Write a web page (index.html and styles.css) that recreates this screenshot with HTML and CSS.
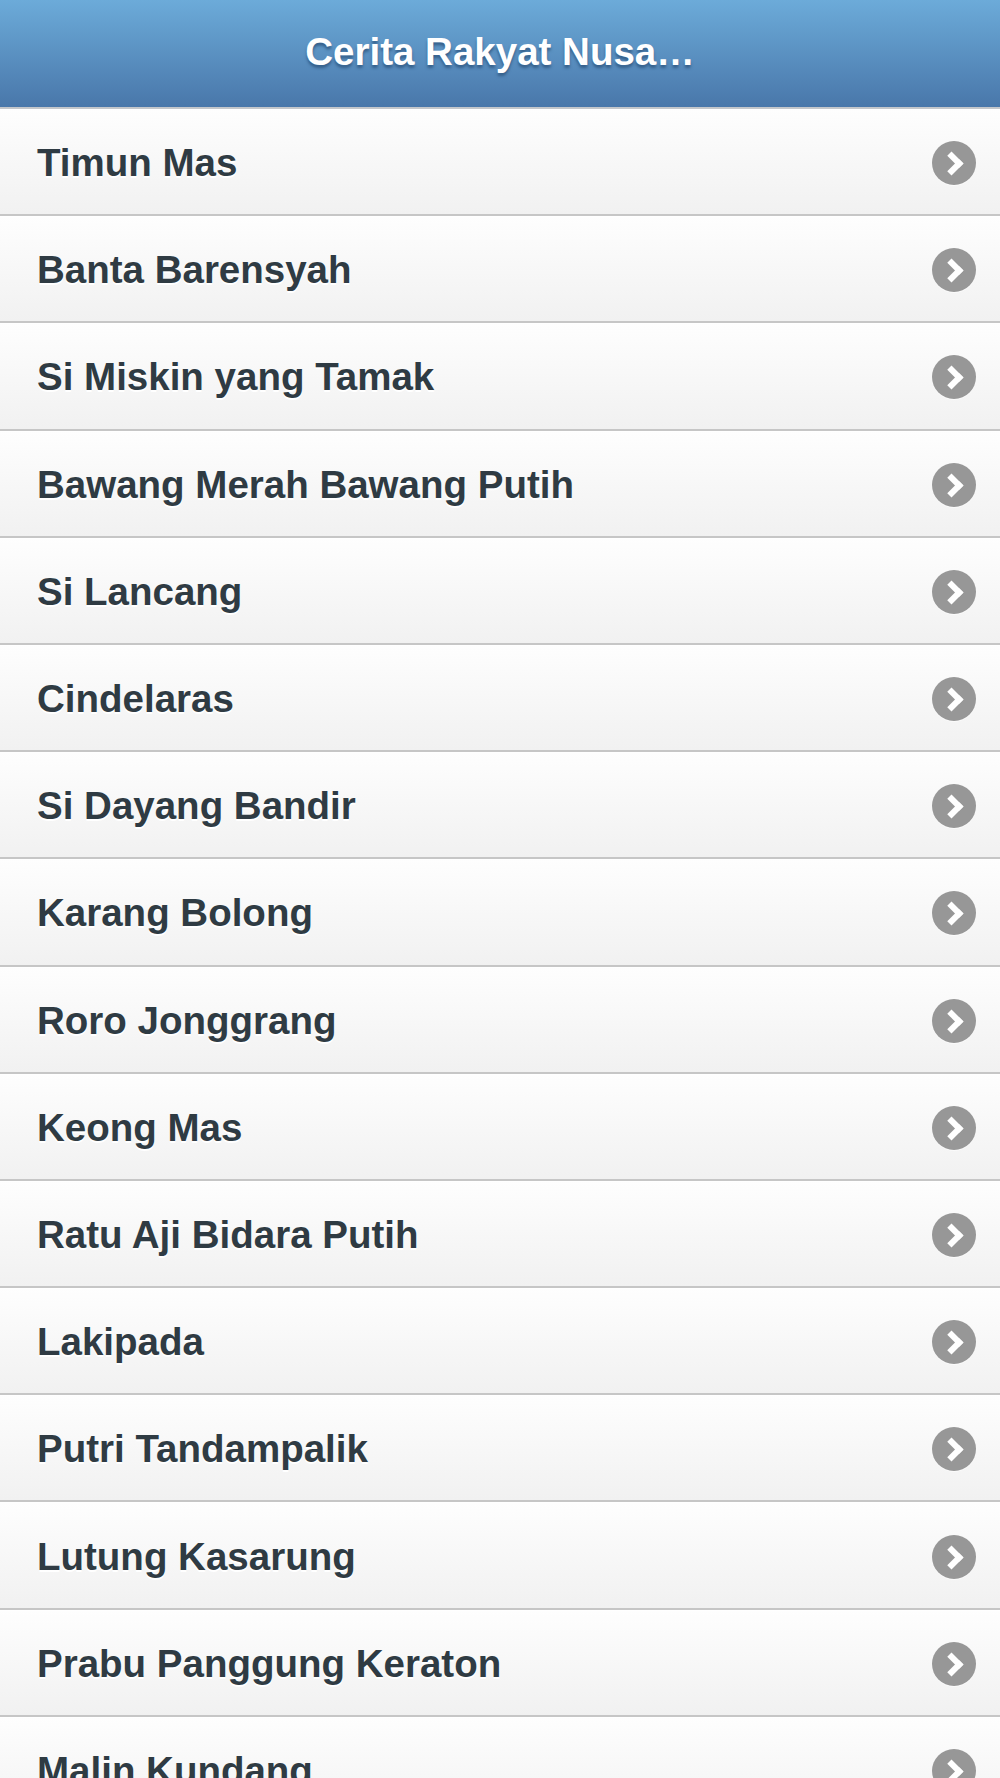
FILE: index.html
```html
<!DOCTYPE html>
<html lang="id">
    <head>
        <meta charset="utf-8">
        <title>Cerita Rakyat Nusantara</title>
        <link rel="stylesheet" href="styles.css">
    </head>
    <body>
<div class="page">
<div class="header">
    <h1 class="title">Cerita Rakyat Nusa…</h1>
</div>
<ul class="listview">
    <li><a href="#timun-mas"><span class="label">Timun Mas</span><span class="arrow"></span></a></li>
    <li><a href="#banta-barensyah"><span class="label">Banta Barensyah</span><span class="arrow"></span></a></li>
    <li><a href="#si-miskin"><span class="label">Si Miskin yang Tamak</span><span class="arrow"></span></a></li>
    <li><a href="#bawang-merah"><span class="label">Bawang Merah Bawang Putih</span><span class="arrow"></span></a></li>
    <li><a href="#si-lancang"><span class="label">Si Lancang</span><span class="arrow"></span></a></li>
    <li><a href="#cindelaras"><span class="label">Cindelaras</span><span class="arrow"></span></a></li>
    <li><a href="#si-dayang"><span class="label">Si Dayang Bandir</span><span class="arrow"></span></a></li>
    <li><a href="#karang-bolong"><span class="label">Karang Bolong</span><span class="arrow"></span></a></li>
    <li><a href="#roro-jonggrang"><span class="label">Roro Jonggrang</span><span class="arrow"></span></a></li>
    <li><a href="#keong-mas"><span class="label">Keong Mas</span><span class="arrow"></span></a></li>
    <li><a href="#ratu-aji"><span class="label">Ratu Aji Bidara Putih</span><span class="arrow"></span></a></li>
    <li><a href="#lakipada"><span class="label">Lakipada</span><span class="arrow"></span></a></li>
    <li><a href="#putri-tandampalik"><span class="label">Putri Tandampalik</span><span class="arrow"></span></a></li>
    <li><a href="#lutung-kasarung"><span class="label">Lutung Kasarung</span><span class="arrow"></span></a></li>
    <li><a href="#prabu-panggung"><span class="label">Prabu Panggung Keraton</span><span class="arrow"></span></a></li>
    <li><a href="#malin-kundang"><span class="label">Malin Kundang</span><span class="arrow"></span></a></li>
</ul>
</div>
    </body>
</html>
```

FILE: styles.css
```css
body {
    margin: 0;
    font-family: "Liberation Sans", Arial, sans-serif;
    background: #f9f9f9;
}
.header {
    height: 107px;
    display: flex;
    align-items: center;
    justify-content: center;
    background: linear-gradient(#6cabd9, #4977aa);
    border-bottom: 2px solid #c4c7cb;
}
.title {
    margin: 0 0 4px 0;
    font-size: 38.5px;
    font-weight: bold;
    color: #fff;
    text-shadow: 0 3px 3px #355f8a;
    white-space: nowrap;
}
.listview {
    list-style: none;
    margin: 0;
    padding: 0;
}
.listview li {
    border-bottom: 2px solid #c6c6c6;
    box-shadow: inset 0 1px 0 #fff;
    background: linear-gradient(#fefefe, #f1f1f1);
}
.listview a {
    height: 105.2px;
    display: flex;
    align-items: center;
    justify-content: space-between;
    padding: 0 24px 0 37px;
    text-decoration: none;
}
.label {
    font-size: 38.5px;
    font-weight: bold;
    color: #2f3b43;
    text-shadow: 0 2px 0 #fff;
    margin-top: 3px;
}
/* chevron circle drawn in css */
.arrow {
    position: relative;
    width: 44px;
    height: 44px;
    margin-top: 3px;
    border-radius: 50%;
    background: #979797;
    box-shadow: 0 1px 0 rgba(255,255,255,.6);
}
.arrow:after {
    content: "";
    position: absolute;
    left: 11px;
    top: 14px;
    width: 11px;
    height: 11px;
    border-top: 6px solid #fff;
    border-right: 6px solid #fff;
    transform: rotate(45deg);
}
```
